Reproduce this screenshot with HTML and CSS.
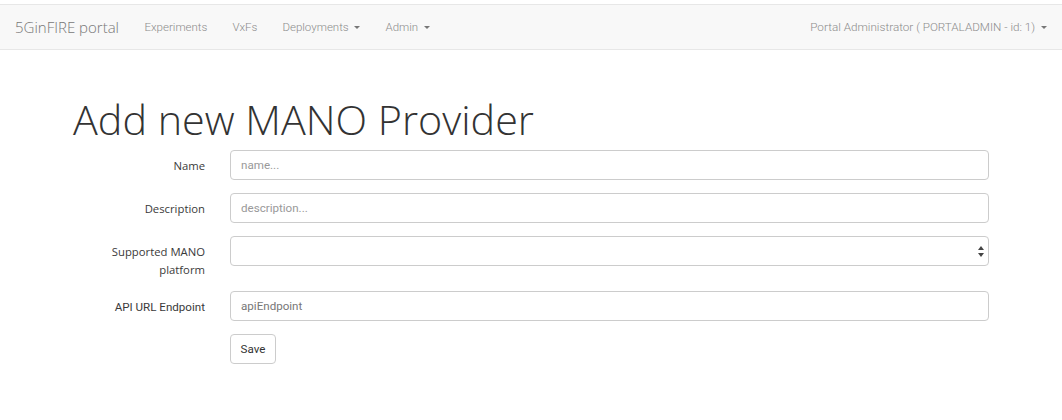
FILE: index.html
```html
<!DOCTYPE html>
<html>
<head>
<meta charset="utf-8">
<link rel="stylesheet" href="styles.css">
</head>
<body>
<nav class="navbar">
  <div class="nav-left">
    <span class="brand">5GinFIRE portal</span>
    <a class="nav-link">Experiments</a>
    <a class="nav-link">VxFs</a>
    <a class="nav-link">Deployments <span class="caret"></span></a>
    <a class="nav-link">Admin <span class="caret"></span></a>
  </div>
  <div class="nav-right">
    <a class="nav-link">Portal Administrator ( PORTALADMIN - id: 1) <span class="caret"></span></a>
  </div>
</nav>
<main class="container">
  <h1 class="title">Add new MANO Provider</h1>
  <form class="form">
    <label class="form-label">Name</label>
    <input class="form-control" type="text" placeholder="name...">
    <label class="form-label">Description</label>
    <input class="form-control" type="text" placeholder="description...">
    <label class="form-label form-label-multi">Supported MANO platform</label>
    <div class="select-box">
      <span class="select-arrows">
        <svg width="6" height="11" viewBox="0 0 6 11"><path d="M3 0 L6 4 L0 4 Z" fill="#444"/><path d="M0 7 L6 7 L3 11 Z" fill="#444"/></svg>
      </span>
    </div>
    <label class="form-label form-label-roboto">API URL Endpoint</label>
    <input class="form-control form-value" type="text" value="apiEndpoint">
    <span></span>
    <div><button class="btn" type="button">Save</button></div>
  </form>
</main>
</body>
</html>
```

FILE: styles.css
```css
html, body {
  margin: 0;
  padding: 0;
  background: #fff;
}
body {
  padding-top: 4px;
  font-family: Roboto, "Liberation Sans", sans-serif;
  color: #333;
}
.navbar {
  height: 44px;
  background: #f8f8f8;
  border-top: 1px solid #e7e7e7;
  border-bottom: 1px solid #e7e7e7;
  display: flex;
  justify-content: space-between;
  align-items: center;
  padding: 0 15px;
}
.nav-left, .nav-right {
  display: flex;
  align-items: center;
}
.brand {
  font-family: "Open Sans", sans-serif;
  font-weight: 300;
  font-size: 15px;
  color: #777;
  margin-right: 13px;
}
.nav-link {
  font-family: Roboto, sans-serif;
  font-weight: 300;
  font-size: 11.5px;
  color: #8c8c8c;
  padding: 0 12.5px;
}
.nav-right .nav-link {
  padding-right: 0;
  font-size: 11.7px;
}
.caret {
  display: inline-block;
  width: 0;
  height: 0;
  margin-left: 3px;
  vertical-align: middle;
  border-top: 3.5px solid #777;
  border-left: 3.5px solid transparent;
  border-right: 3.5px solid transparent;
}
.container {
  padding-left: 73px;
}
.title {
  font-family: "Open Sans", sans-serif;
  font-weight: 300;
  font-size: 41.3px;
  color: #333;
  margin: 41px 0 3px 0;
  line-height: 56px;
}
.form {
  display: grid;
  grid-template-columns: 132px 759px;
  column-gap: 25px;
  row-gap: 13px;
  margin-top: 0;
}
.form-label {
  font-family: "Open Sans", sans-serif;
  font-size: 11.3px;
  color: #3a3a3a;
  text-align: right;
  padding-top: 7px;
  line-height: 18px;
}
.form-label-multi {
  margin-bottom: -1px;
}
.form-label-roboto {
  font-family: Roboto, sans-serif;
  font-size: 11.6px;
}
.form-control {
  box-sizing: border-box;
  height: 30px;
  margin: 0;
  border: 1px solid #ccc;
  border-radius: 4px;
  padding: 0 10px;
  font-family: Roboto, sans-serif;
  font-size: 11.6px;
  color: #555;
  background: #fff;
}
.form-control::placeholder {
  color: #999;
}
.form-value {
  color: #777;
}
.select-box {
  box-sizing: border-box;
  height: 30px;
  border: 1px solid #ccc;
  border-radius: 4px;
  display: flex;
  justify-content: flex-end;
  align-items: center;
  padding-right: 4px;
}
.select-arrows {
  display: flex;
}
.btn {
  box-sizing: border-box;
  height: 30px;
  width: 46px;
  background: #fff;
  border: 1px solid #ccc;
  border-radius: 4px;
  font-family: Roboto, sans-serif;
  font-size: 11.6px;
  color: #333;
  padding: 0;
}
```
